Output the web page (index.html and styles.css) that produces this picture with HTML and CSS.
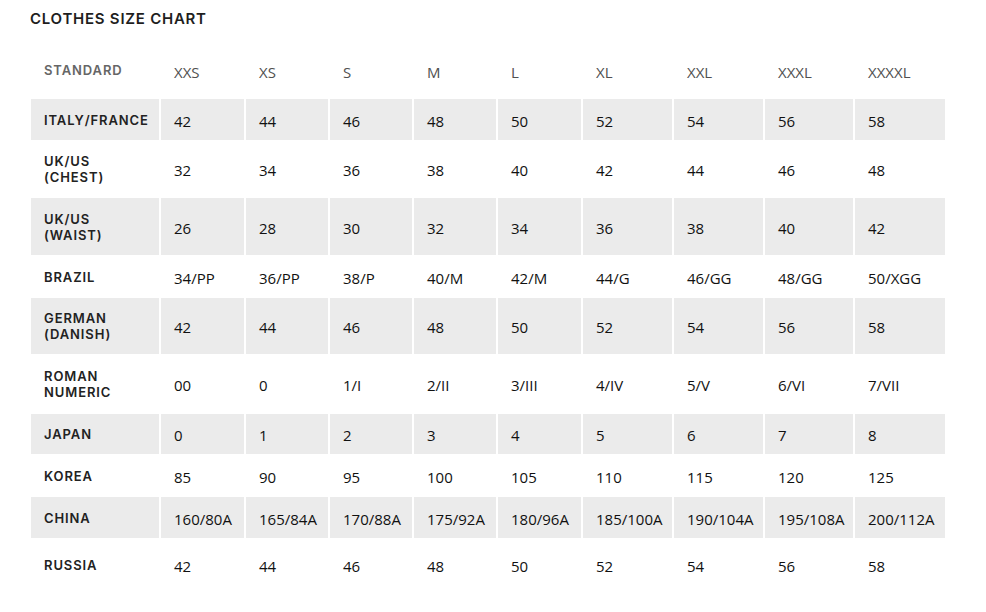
FILE: index.html
```html
<!DOCTYPE html>
<html lang="en">
<head>
<meta charset="utf-8">
<title>Clothes Size Chart</title>
<link rel="stylesheet" href="styles.css">
</head>
<body>
<div class="page">
  <h1 class="title">CLOTHES SIZE CHART</h1>
  <table class="chart">
    <thead>
      <tr class="head">
        <th class="label c0">STANDARD</th>
        <th class="size c1">XXS</th>
        <th class="size c2">XS</th>
        <th class="size c3">S</th>
        <th class="size c4">M</th>
        <th class="size c5">L</th>
        <th class="size c6">XL</th>
        <th class="size c7">XXL</th>
        <th class="size c8">XXXL</th>
        <th class="size c9">XXXXL</th>
      </tr>
    </thead>
    <tbody>
      <tr class="grey h41"><th class="label">ITALY/FRANCE</th><td>42</td><td>44</td><td>46</td><td>48</td><td>50</td><td>52</td><td>54</td><td>56</td><td>58</td></tr>
      <tr class="h58"><th class="label">UK/US<br>(CHEST)</th><td>32</td><td>34</td><td>36</td><td>38</td><td>40</td><td>42</td><td>44</td><td>46</td><td>48</td></tr>
      <tr class="grey h57"><th class="label">UK/US<br>(WAIST)</th><td>26</td><td>28</td><td>30</td><td>32</td><td>34</td><td>36</td><td>38</td><td>40</td><td>42</td></tr>
      <tr class="h43"><th class="label">BRAZIL</th><td>34/PP</td><td>36/PP</td><td>38/P</td><td>40/M</td><td>42/M</td><td>44/G</td><td>46/GG</td><td>48/GG</td><td>50/XGG</td></tr>
      <tr class="grey h56"><th class="label">GERMAN<br>(DANISH)</th><td>42</td><td>44</td><td>46</td><td>48</td><td>50</td><td>52</td><td>54</td><td>56</td><td>58</td></tr>
      <tr class="h60"><th class="label">ROMAN<br>NUMERIC</th><td>00</td><td>0</td><td>1/I</td><td>2/II</td><td>3/III</td><td>4/IV</td><td>5/V</td><td>6/VI</td><td>7/VII</td></tr>
      <tr class="grey h40"><th class="label">JAPAN</th><td>0</td><td>1</td><td>2</td><td>3</td><td>4</td><td>5</td><td>6</td><td>7</td><td>8</td></tr>
      <tr class="h43"><th class="label">KOREA</th><td>85</td><td>90</td><td>95</td><td>100</td><td>105</td><td>110</td><td>115</td><td>120</td><td>125</td></tr>
      <tr class="grey h41"><th class="label">CHINA</th><td>160/80A</td><td>165/84A</td><td>170/88A</td><td>175/92A</td><td>180/96A</td><td>185/100A</td><td>190/104A</td><td>195/108A</td><td>200/112A</td></tr>
      <tr class="h54"><th class="label">RUSSIA</th><td>42</td><td>44</td><td>46</td><td>48</td><td>50</td><td>52</td><td>54</td><td>56</td><td>58</td></tr>
    </tbody>
  </table>
</div>
</body>
</html>
```

FILE: styles.css
```css
* { box-sizing: border-box; }

html, body {
  margin: 0;
  padding: 0;
  background: #ffffff;
}

.page {
  padding-left: 30px;
  font-family: "Open Sans", "Noto Sans", Arial, sans-serif;
  color: #1a1a1a;
}

.title {
  margin: 0;
  height: 40px;
  padding-top: 9px;
  font-family: Inter, "Noto Sans", Arial, sans-serif;
  font-size: 15px;
  line-height: 20px;
  font-weight: 600;
  letter-spacing: 0.75px;
  color: #1e1e1e;
}

.chart {
  margin-left: 1px;
  table-layout: fixed;
  border-collapse: separate;
  border-spacing: 0;
  width: 916px;
}

.chart th,
.chart td {
  padding: 0 0 0 13px;
  border-right: 2px solid #ffffff;
  text-align: left;
  vertical-align: middle;
}

.chart .c0 { width: 130px; }
.chart .c1 { width: 85px; }
.chart .c2 { width: 84px; }
.chart .c3 { width: 84px; }
.chart .c4 { width: 84px; }
.chart .c5 { width: 85px; }
.chart .c6 { width: 91px; }
.chart .c7 { width: 91px; }
.chart .c8 { width: 90px; }
.chart .c9 { width: 92px; }

.head th {
  height: 59px;
  vertical-align: top;
  padding-top: 22px;
}

.label {
  font-family: Inter, "Noto Sans", Arial, sans-serif;
  font-size: 13px;
  line-height: 16px;
  font-weight: 600;
  letter-spacing: 0.9px;
  color: #222222;
}

.head .label {
  color: #666666;
}

.size {
  font-size: 15px;
  line-height: 20px;
  font-weight: 400;
  color: #505050;
}

.chart td {
  font-size: 15px;
  line-height: 20px;
  padding-top: 2px;
  color: #111111;
}

.grey th,
.grey td {
  background: #ebebeb;
}

.h40 { height: 40px; }
.h41 { height: 41px; }
.h43 { height: 43px; }
.h54 { height: 54px; }
.h56 { height: 56px; }
.h57 { height: 57px; }
.h58 { height: 58px; }
.h60 { height: 60px; }
```
